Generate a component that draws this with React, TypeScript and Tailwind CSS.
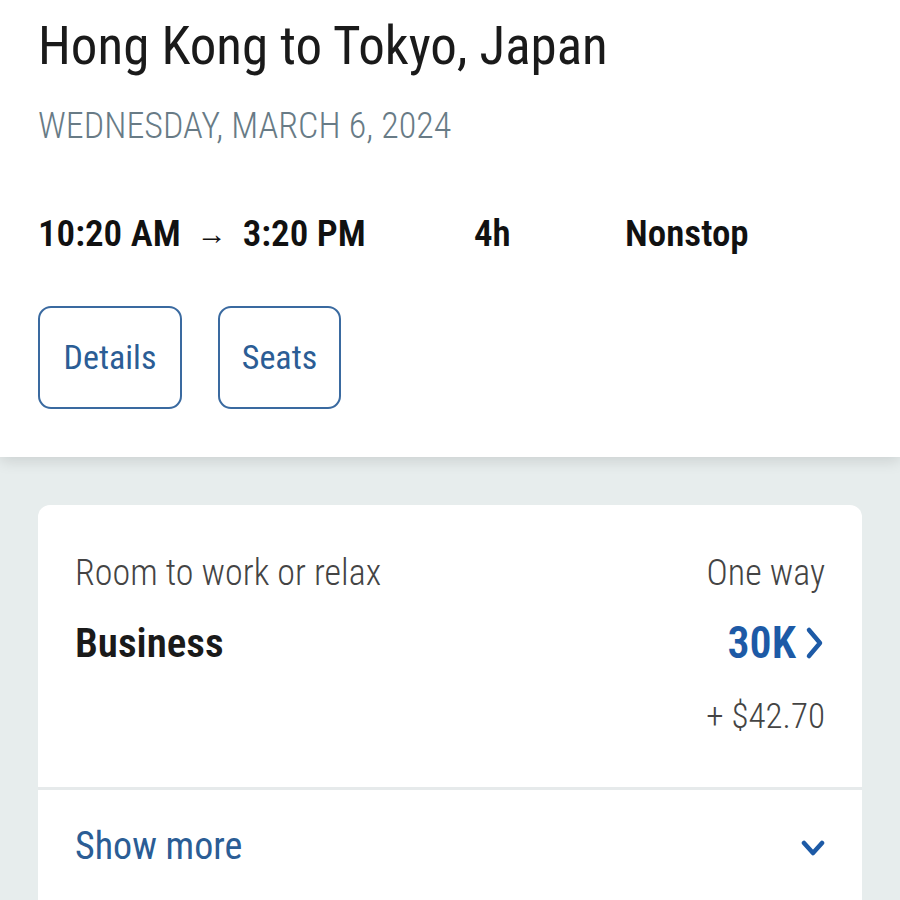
function ChevronRight() {
  return (
    <svg width="20" height="34" viewBox="0 0 20 34" className="ml-[9px]">
      <path d="M4 4 L15 17 L4 30" fill="none" stroke="#1d5aa6" strokeWidth="4.5" strokeLinecap="round" strokeLinejoin="round" />
    </svg>
  );
}

function ChevronDown() {
  return (
    <svg width="24" height="18" viewBox="0 0 24 18">
      <path d="M3 4 L12 14 L21 4" fill="none" stroke="#1d5aa6" strokeWidth="4.5" strokeLinecap="round" strokeLinejoin="round" />
    </svg>
  );
}

export default function App() {
  return (
    <div className="w-[900px] h-[900px] overflow-hidden bg-[#e7eded] font-['Roboto_Condensed',sans-serif]">
      <div className="bg-white h-[457px] pl-[38px] pt-[13px] shadow-[0_4px_14px_rgba(0,0,0,0.12)] relative z-10">
        <h1 className="text-[53px] leading-[66px] text-[#1a1a1a] font-normal">Hong Kong to Tokyo, Japan</h1>
        <div className="mt-[25px] text-[36px] leading-[44px] text-[#687b86] font-light">WEDNESDAY, MARCH 6, 2024</div>
        <div className="mt-[62px] grid grid-cols-[436px_151px_auto] items-center text-[37px] leading-[48px] text-[#111] font-semibold">
          <div className="flex items-center">
            <span>10:20 AM</span>
            <span className="mx-[16px] text-[30px] font-light">→</span>
            <span>3:20 PM</span>
          </div>
          <span>4h</span>
          <span>Nonstop</span>
        </div>
        <div className="mt-[48px] flex gap-[36px]">
          <button className="h-[103px] w-[144px] rounded-[13px] border-[2.5px] border-[#3a6aa0] text-[#2b5d95] text-[34px] font-normal">Details</button>
          <button className="h-[103px] w-[123px] rounded-[13px] border-[2.5px] border-[#3a6aa0] text-[#2b5d95] text-[34px] font-normal">Seats</button>
        </div>
      </div>
      <div className="px-[38px] pt-[48px]">
        <div className="bg-white rounded-[12px] h-[420px]">
          <div className="px-[37px] pt-[46px] pb-[48px] border-b-[3px] border-[#e6eaeb]">
            <div className="flex justify-between text-[36px] leading-[44px] text-[#444] font-light">
              <span>Room to work or relax</span>
              <span>One way</span>
            </div>
            <div className="mt-[22px] flex justify-between items-center">
              <span className="text-[41px] leading-[52px] text-[#1a1a1a] font-semibold">Business</span>
              <span className="flex items-center text-[44px] leading-[52px] text-[#1d5aa6] font-semibold">30K<ChevronRight /></span>
            </div>
            <div className="mt-[26px] flex justify-end text-[35px] leading-[44px] text-[#444] font-light">+ $42.70</div>
          </div>
          <div className="px-[37px] h-[112px] flex items-center justify-between">
            <span className="text-[38px] text-[#2b5d95] font-normal">Show more</span>
            <span className="mt-[4px]"><ChevronDown /></span>
          </div>
        </div>
      </div>
    </div>
  );
}
